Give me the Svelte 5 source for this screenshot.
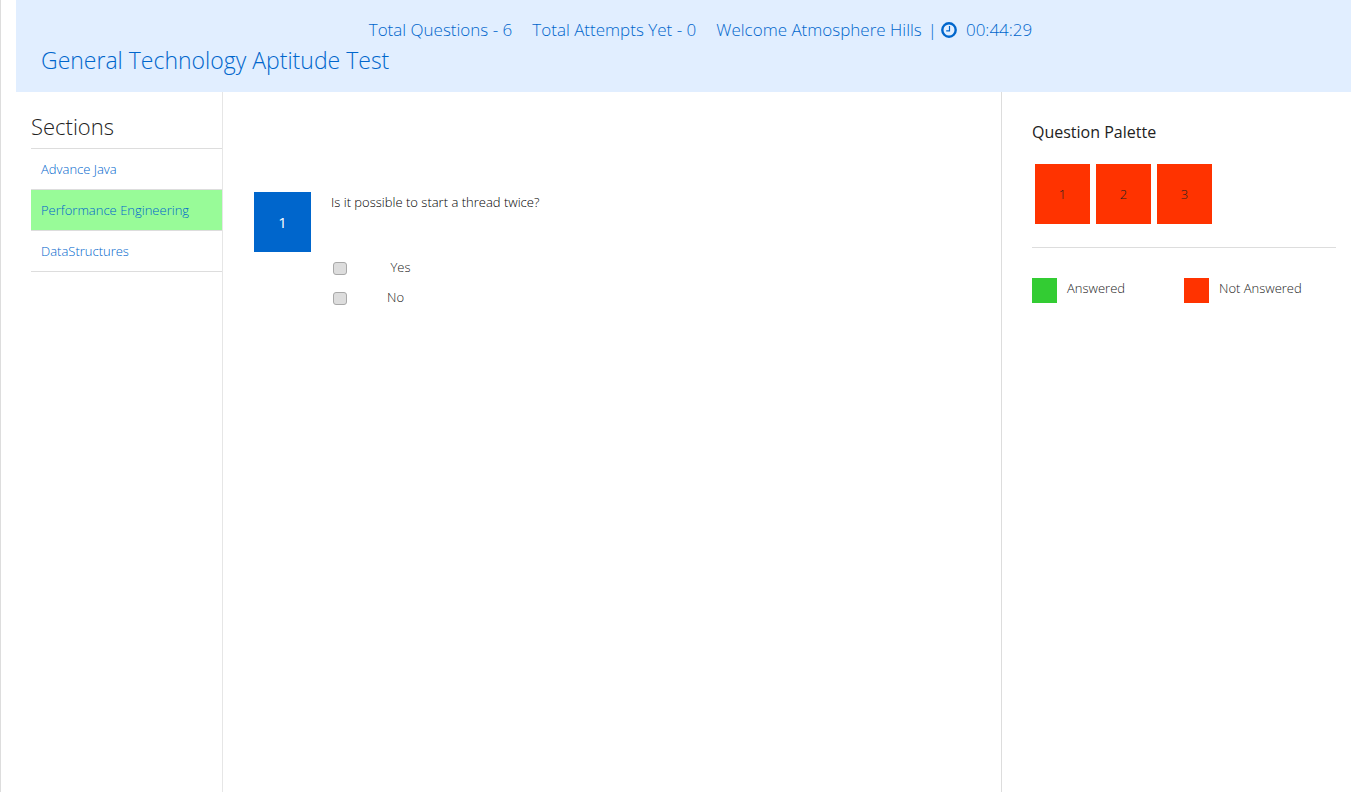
<script>
  const sections = ['Advance Java', 'Performance Engineering', 'DataStructures'];
  let active = $state(1);

  const palette = [1, 2, 3];
  const question = {
    number: 1,
    text: 'Is it possible to start a thread twice?',
    options: ['\u00a0Yes', 'No']
  };
</script>

<div class="page">
  <header class="banner">
    <div class="status">
      <span>Total Questions - 6</span>
      <span>Total Attempts Yet - 0</span>
      <span>Welcome Atmosphere Hills</span>
      <span class="timer">
        <span>|</span>
        <svg viewBox="0 0 16 16" aria-hidden="true">
          <circle cx="8" cy="8" r="6.7" fill="none" stroke="currentColor" stroke-width="2.4" />
          <path d="M8.5 4v4.8H5.2" fill="none" stroke="currentColor" stroke-width="1.2" />
        </svg>
        <span class="time">00:44:29</span>
      </span>
    </div>
    <h1>General Technology Aptitude Test</h1>
  </header>

  <div class="columns">
    <nav class="sections">
      <h2>Sections</h2>
      <ul>
        {#each sections as name, i}
          <li class:active={i === active}>
            <a href="#section-{i + 1}" onclick={() => (active = i)}>{name}</a>
          </li>
        {/each}
      </ul>
    </nav>

    <main class="question">
      <div class="number">{question.number}</div>
      <fieldset>
        <legend>{question.text}</legend>
        {#each question.options as option, i}
          <div class="option">
            <input type="checkbox" id="option-{i}" />
            <label for="option-{i}">{option}</label>
          </div>
        {/each}
      </fieldset>
    </main>

    <aside class="palette">
      <h3>Question Palette</h3>
      <div class="tiles">
        {#each palette as n}
          <button type="button">{n}</button>
        {/each}
      </div>
      <div class="legend">
        <div class="key"><span class="swatch answered"></span>Answered</div>
        <div class="key"><span class="swatch"></span>Not Answered</div>
      </div>
    </aside>
  </div>
</div>

<style>
  :global(body) {
    margin: 0;
    background: #fff;
  }

  .page {
    box-sizing: border-box;
    display: flex;
    flex-direction: column;
    min-height: 100vh;
    padding: 0 15px;
    border-left: 1px solid #ddd;
    font-family: 'Open Sans', 'Noto Sans', sans-serif;
    font-size: 13px;
    font-weight: 300;
    line-height: 20px;
    color: #222;
  }

  .banner {
    box-sizing: border-box;
    padding: 16px 25px;
    background: #e1eeff;
    color: #0066cc;
  }

  .status {
    display: flex;
    justify-content: center;
    gap: 20px;
    padding-left: 34px;
    font-size: 17px;
    line-height: 28px;
  }

  .timer {
    display: flex;
    align-items: center;
    gap: 4px;
    margin-left: -14px;
  }

  .timer svg {
    width: 16px;
    height: 16px;
  }

  .time {
    margin-left: 5px;
  }

  h1,
  h2,
  h3 {
    margin: 0;
    font-weight: 300;
  }

  h1 {
    font-size: 23px;
    line-height: 32px;
  }

  .columns {
    flex: 1;
    display: grid;
    grid-template-columns: 207fr 779fr 349fr;
  }

  .sections {
    padding: 14px 0 0 15px;
    border-right: 1px solid #e6e6e6;
  }

  h2 {
    padding-bottom: 2px;
    font-size: 22px;
    line-height: 40px;
  }

  ul {
    margin: 0;
    padding: 0;
    list-style: none;
    border-top: 1px solid #ddd;
  }

  li {
    border-bottom: 1px solid #ddd;
  }

  li.active {
    background: #98fb98;
  }

  a {
    display: block;
    padding: 10px;
    color: #0066cc;
    text-decoration: none;
  }

  .question {
    display: flex;
    align-items: flex-start;
    gap: 20px;
    padding: 100px 31px 0;
    border-right: 1px solid #ddd;
  }

  .number {
    width: 57px;
    background: #0066cc;
    color: #fff;
    font-size: 15px;
    font-weight: 400;
    line-height: 60px;
    text-align: center;
  }

  fieldset {
    min-width: 0;
    margin: 0;
    padding: 0;
    border: 0;
  }

  legend {
    padding: 0 0 40px;
    color: #000;
  }

  .option {
    display: flex;
    align-items: center;
    gap: 37px;
    height: 30px;
  }

  input {
    appearance: none;
    box-sizing: border-box;
    width: 14px;
    height: 13px;
    margin: 3px 3px 0 2px;
    border: 1px solid #a9a9a9;
    border-radius: 3px;
    background: #ddd;
  }

  input:checked {
    background: #0066cc;
  }

  .palette {
    padding: 28px 15px 0 30px;
  }

  h3 {
    font-size: 16px;
    font-weight: 400;
    line-height: 24px;
  }

  .tiles {
    display: flex;
    gap: 6px;
    padding: 20px 3px 23px;
    border-bottom: 1px solid #ddd;
  }

  button {
    width: 55px;
    height: 60px;
    padding: 0;
    border: 0;
    background: #ff3300;
    color: #222;
    font: inherit;
  }

  .legend {
    display: grid;
    grid-template-columns: 1fr 1fr;
    padding-top: 30px;
  }

  .key {
    display: flex;
    gap: 10px;
  }

  .swatch {
    width: 25px;
    height: 25px;
    background: #ff3300;
  }

  .swatch.answered {
    background: #33cc33;
  }
</style>
